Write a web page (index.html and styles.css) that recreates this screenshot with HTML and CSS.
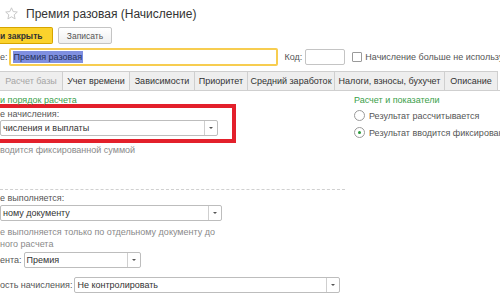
FILE: index.html
```html
<!DOCTYPE html>
<html lang="ru">
<head>
<meta charset="utf-8">
<link rel="stylesheet" href="styles.css">
</head>
<body>
<div class="page">
  <div class="header">
    <svg class="star" width="13" height="13" viewBox="0 0 13 13"><polygon points="6.5,0.8 8.2,4.6 12.3,5 9.2,7.8 10.1,11.9 6.5,9.8 2.9,11.9 3.8,7.8 0.7,5 4.8,4.6" fill="none" stroke="#c8c8c8" stroke-width="1"/></svg>
    <span class="title">Премия разовая (Начисление)</span>
  </div>
  <div class="toolbar">
    <span class="btn btn-main">и закрыть</span>
    <span class="btn">Записать</span>
  </div>
  <div class="name-row">
    <span class="lbl">е:</span>
    <span class="input input-name"><span class="sel">Премия разовая</span></span>
    <span class="lbl code-lbl">Код:</span>
    <span class="input input-code"></span>
    <span class="check"></span>
    <span class="lbl">Начисление больше не используется</span>
  </div>
  <div class="tabs">
    <span class="tab tab-dis">Расчет базы</span>
    <span class="tab">Учет времени</span>
    <span class="tab">Зависимости</span>
    <span class="tab">Приоритет</span>
    <span class="tab">Средний заработок</span>
    <span class="tab">Налоги, взносы, бухучет</span>
    <span class="tab">Описание</span>
  </div>
  <div class="content">
    <div class="left">
      <div class="group-title">и порядок расчета</div>
      <div class="hl">
        <div class="lbl-line">е начисления:</div>
        <div class="select w218"><span class="val">числения и выплаты</span><span class="dd"></span></div>
      </div>
      <div class="note">водится фиксированной суммой</div>
      <div class="sep"></div>
      <div class="lbl-line">е выполняется:</div>
      <div class="select w222 s2"><span class="val">ному документу</span><span class="dd"></span></div>
      <div class="note note2">е выполняется только по отдельному документу до<br>ного расчета</div>
      <div class="row r1">
        <span class="lbl">ента:</span>
        <div class="select w117"><span class="val">Премия</span><span class="dd"></span></div>
      </div>
      <div class="row r2">
        <span class="lbl">ость начисления:</span>
        <div class="select w266"><span class="val">Не контролировать</span><span class="dd"></span></div>
      </div>
    </div>
    <div class="right">
      <div class="group-title">Расчет и показатели</div>
      <div class="radio-row first"><span class="radio"></span><span class="lbl">Результат рассчитывается</span></div>
      <div class="radio-row"><span class="radio on"></span><span class="lbl">Результат вводится фиксированной суммой</span></div>
    </div>
  </div>
</div>
</body>
</html>
```
FILE: styles.css
```css
html, body {
  margin: 0;
  padding: 0;
  background: #fff;
}
body {
  width: 500px;
  height: 300px;
  overflow: hidden;
  font-family: "Liberation Sans", Arial, sans-serif;
  font-size: 9px;
  color: #555;
}
.page {
  width: 500px;
  height: 300px;
  overflow: hidden;
}
.header {
  display: flex;
  align-items: center;
  height: 26px;
  padding-left: 5px;
  white-space: nowrap;
}
.star {
  margin-right: 8px;
  margin-top: 1px;
  flex: none;
}
.title {
  font-size: 12px;
  color: #333;
  margin-top: 2px;
}
.toolbar {
  display: flex;
  gap: 5px;
  height: 17px;
  margin-top: 1px;
}
.btn {
  display: flex;
  align-items: center;
  justify-content: center;
  box-sizing: border-box;
  height: 17px;
  width: 54px;
  border: 1px solid #c4c4c4;
  border-radius: 2px;
  background: linear-gradient(#ffffff, #efefef);
  color: #555;
  font-size: 8.5px;
  flex: none;
}
.btn-main {
  width: 53px;
  border-color: #d6a500;
  border-left: none;
  border-radius: 0 2px 2px 0;
  background: #fbd22c;
  color: #333;
  font-weight: bold;
  font-size: 8.5px;
  justify-content: flex-start;
}
.name-row {
  display: flex;
  align-items: center;
  height: 18px;
  margin-top: 4px;
  white-space: nowrap;
}
.name-row > * {
  flex: none;
}
.lbl {
  white-space: nowrap;
}
.input {
  box-sizing: border-box;
  height: 18px;
  border: 1px solid #c4c4c4;
  border-radius: 2px;
  background: #fff;
  display: flex;
  align-items: center;
}
.input-name {
  width: 269px;
  margin-left: 1px;
  border: 2px solid #f7cd50;
  padding-left: 2px;
}
.sel {
  background: #7f8fe0;
  color: #22305a;
  line-height: 12px;
  padding: 0 1px;
}
.code-lbl {
  margin-left: 7px;
}
.input-code {
  width: 40px;
  height: 16px;
  margin-left: 3px;
}
.check {
  box-sizing: border-box;
  width: 10px;
  height: 10px;
  border: 1px solid #9a9a9a;
  border-radius: 1px;
  margin: 0 3px 0 7px;
}
.tabs {
  display: flex;
  height: 20px;
  margin-top: 5px;
  border-bottom: 1px solid #cfcfcf;
  box-sizing: border-box;
  white-space: nowrap;
}
.tab {
  display: flex;
  align-items: center;
  justify-content: center;
  box-sizing: border-box;
  height: 19px;
  border: 1px solid #cfcfcf;
  border-bottom: none;
  border-left: none;
  background: #eeeeee;
  color: #333;
  flex: none;
  overflow: hidden;
}
.tab:nth-child(1) { width: 63px; }
.tab:nth-child(2) { width: 67px; background: #f3f3f3; }
.tab:nth-child(3) { width: 65px; }
.tab:nth-child(4) { width: 53px; }
.tab:nth-child(5) { width: 87px; }
.tab:nth-child(6) { width: 110px; }
.tab:nth-child(7) { width: 53px; }
.tab-dis {
  color: #a5a5a5;
}
.content {
  display: flex;
}
.left {
  width: 345px;
  flex: none;
}
.right {
  margin-left: 9px;
  flex: none;
  white-space: nowrap;
}
.group-title {
  color: #3aa04a;
  line-height: 12px;
  margin-top: 3px;
  white-space: nowrap;
}
.hl {
  width: 240px;
  margin-left: -4px;
  box-sizing: border-box;
  border: 4px solid #e3202b;
  padding: 0 0 3px 4px;
  margin-top: -2px;
}
.lbl-line {
  line-height: 12px;
  white-space: nowrap;
}
.select {
  box-sizing: border-box;
  height: 16px;
  border: 1px solid #bdbdbd;
  border-radius: 2px;
  display: flex;
  align-items: center;
  background: #fff;
  color: #333;
  white-space: nowrap;
  flex: none;
}
.hl .select {
  margin-left: -4px;
}
.hl .lbl-line {
  margin-left: -4px;
}
.val {
  flex: 1;
  padding-left: 2px;
  overflow: hidden;
}
.dd {
  width: 12px;
  height: 14px;
  border-left: 1px solid #cfcfcf;
  position: relative;
  flex: none;
}
.dd::after {
  content: "";
  position: absolute;
  left: 4px;
  top: 6px;
  border-left: 2px solid transparent;
  border-right: 2px solid transparent;
  border-top: 2px solid #555;
}
.w218 { width: 218px; }
.w222 { width: 222px; }
.w117 { width: 117px; }
.w266 { width: 266px; }
.note {
  color: #8a8a8a;
  line-height: 12px;
  margin-top: 1px;
  white-space: nowrap;
}
.sep {
  margin-top: 33px;
  border-top: 1px dashed #d0d0d0;
  width: 345px;
}
.sep + .lbl-line {
  margin-top: 2px;
}
.s2 {
  margin-top: 1px;
}
.note2 {
  margin-top: 5px;
}
.row {
  display: flex;
  align-items: center;
  gap: 2px;
}
.r1 { margin-top: 2px; }
.r2 { margin-top: 9px; }
.radio-row {
  display: flex;
  align-items: center;
  height: 17px;
}
.radio-row.first {
  margin-top: 1px;
}
.radio {
  box-sizing: border-box;
  width: 11px;
  height: 11px;
  border: 1px solid #9a9a9a;
  border-radius: 50%;
  margin-right: 4px;
  position: relative;
  flex: none;
}
.radio.on::after {
  content: "";
  position: absolute;
  left: 3px;
  top: 3px;
  width: 3px;
  height: 3px;
  border-radius: 50%;
  background: #2a9a3a;
}
```
